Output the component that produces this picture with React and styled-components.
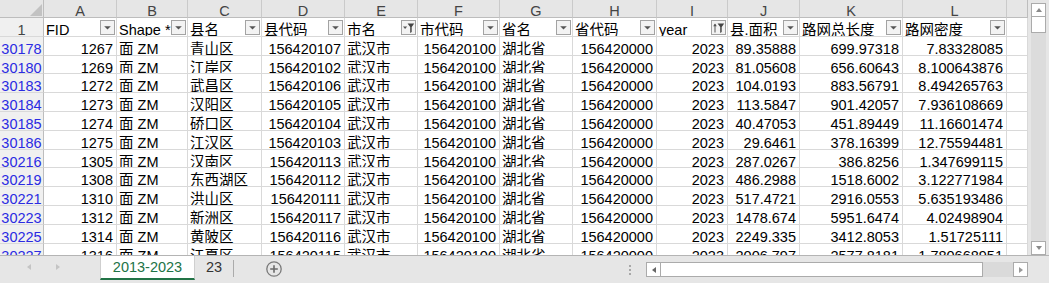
import React from 'react';
import styled, { createGlobalStyle, css } from 'styled-components';

const GlobalStyle = createGlobalStyle`
  html, body { margin: 0; padding: 0; overflow: hidden; background: #e6e6e6; }
  body { font-family: "Liberation Sans", "Noto Sans CJK SC", sans-serif; }
`;

const COL_WIDTHS = [44, 73, 71, 74, 83, 73, 82, 73, 84, 71, 72, 103, 104, 21];

const COLUMNS = [
  { letter: 'A', label: 'FID', num: true },
  { letter: 'B', label: 'Shape *', num: false },
  { letter: 'C', label: '县名', num: false },
  { letter: 'D', label: '县代码', num: true },
  { letter: 'E', label: '市名', num: false, filter: 'filtered' },
  { letter: 'F', label: '市代码', num: true },
  { letter: 'G', label: '省名', num: false },
  { letter: 'H', label: '省代码', num: true },
  { letter: 'I', label: 'year', num: true, filter: 'sorted' },
  { letter: 'J', label: '县.面积', num: true },
  { letter: 'K', label: '路网总长度', num: true },
  { letter: 'L', label: '路网密度', num: true },
];

const ROWS = [
  ['30178', '1267', '面 ZM', '青山区', '156420107', '武汉市', '156420100', '湖北省', '156420000', '2023', '89.35888', '699.97318', '7.83328085'],
  ['30180', '1269', '面 ZM', '江岸区', '156420102', '武汉市', '156420100', '湖北省', '156420000', '2023', '81.05608', '656.60643', '8.100643876'],
  ['30183', '1272', '面 ZM', '武昌区', '156420106', '武汉市', '156420100', '湖北省', '156420000', '2023', '104.0193', '883.56791', '8.494265763'],
  ['30184', '1273', '面 ZM', '汉阳区', '156420105', '武汉市', '156420100', '湖北省', '156420000', '2023', '113.5847', '901.42057', '7.936108669'],
  ['30185', '1274', '面 ZM', '硚口区', '156420104', '武汉市', '156420100', '湖北省', '156420000', '2023', '40.47053', '451.89449', '11.16601474'],
  ['30186', '1275', '面 ZM', '江汉区', '156420103', '武汉市', '156420100', '湖北省', '156420000', '2023', '29.6461', '378.16399', '12.75594481'],
  ['30216', '1305', '面 ZM', '汉南区', '156420113', '武汉市', '156420100', '湖北省', '156420000', '2023', '287.0267', '386.8256', '1.347699115'],
  ['30219', '1308', '面 ZM', '东西湖区', '156420112', '武汉市', '156420100', '湖北省', '156420000', '2023', '486.2988', '1518.6002', '3.122771984'],
  ['30221', '1310', '面 ZM', '洪山区', '156420111', '武汉市', '156420100', '湖北省', '156420000', '2023', '517.4721', '2916.0553', '5.635193486'],
  ['30223', '1312', '面 ZM', '新洲区', '156420117', '武汉市', '156420100', '湖北省', '156420000', '2023', '1478.674', '5951.6474', '4.02498904'],
  ['30225', '1314', '面 ZM', '黄陂区', '156420116', '武汉市', '156420100', '湖北省', '156420000', '2023', '2249.335', '3412.8053', '1.51725111'],
  ['30227', '1316', '面 ZM', '江夏区', '156420115', '武汉市', '156420100', '湖北省', '156420000', '2023', '2006.797', '2577.8181', '1.780668951'],
];

const GRID = '#d9d9d9';
const HEAD_LINE = '#bdbdbd';

const Window = styled.div`
  width: 1049px;
  height: 283px;
  display: flex;
  flex-direction: column;
  background: #e6e6e6;
  overflow: hidden;
  font-family: "Liberation Sans", "Noto Sans CJK SC", sans-serif;
`;

const Main = styled.div`
  display: flex;
  height: 255px;
`;

const Sheet = styled.div`
  width: 1028px;
  height: 255px;
  overflow: hidden;
  display: grid;
  grid-template-columns: ${COL_WIDTHS.map((w) => `${w}px`).join(' ')};
  grid-template-rows: 18px repeat(13, 18.8px);
  align-content: start;
  background: #fff;
`;

const Corner = styled.div`
  box-sizing: border-box;
  background: #e6e6e6;
  border-right: 1px solid ${HEAD_LINE};
  border-bottom: 1px solid ${HEAD_LINE};
  display: flex;
  justify-content: flex-end;
  align-items: flex-end;
  padding: 0 1px 1px 0;
`;

const CornerMark = styled.span`
  width: 0;
  height: 0;
  border-left: 12px solid transparent;
  border-bottom: 12px solid #c2c2c2;
`;

const ColHead = styled.div`
  box-sizing: border-box;
  background: #e6e6e6;
  color: #444;
  font-size: 14.5px;
  line-height: 16px;
  padding-top: 3px;
  text-align: center;
  border-right: 1px solid ${(p) => (p.$last ? HEAD_LINE : '#cacaca')};
  border-bottom: 1px solid ${HEAD_LINE};
  overflow: hidden;
`;

const RowHead = styled.div`
  box-sizing: border-box;
  background: #f0f0f0;
  color: ${(p) => (p.$filtered ? '#2b2be2' : '#444')};
  font-size: 14.5px;
  line-height: 16px;
  padding-top: 4px;
  text-align: center;
  border-right: 1px solid ${HEAD_LINE};
  border-bottom: 1px solid ${GRID};
  white-space: nowrap;
  overflow: hidden;
`;

const Cell = styled.div`
  box-sizing: border-box;
  position: relative;
  background: #fff;
  color: #000;
  font-size: 14.5px;
  line-height: 16px;
  padding: 4px ${(p) => (p.$num ? '3px' : '2px')} 0 2px;
  text-align: ${(p) => (p.$num ? 'right' : 'left')};
  border-right: 1px solid ${GRID};
  border-bottom: 1px solid ${GRID};
  white-space: nowrap;
  overflow: hidden;
`;

const FilterButton = styled.span`
  position: absolute;
  right: 1px;
  bottom: 1px;
  width: 15px;
  height: 15px;
  box-sizing: border-box;
  border: 1px solid #a3a3a3;
  background: #f3f3f3;
  display: flex;
  align-items: center;
  justify-content: center;
`;

function FilterIcon({ kind }) {
  if (kind === 'filtered') {
    return (
      <svg width="13" height="13" viewBox="0 0 13 13">
        <path d="M1 5.5h4.2L3.1 8z" fill="#555" />
        <path d="M5.6 2.6h6.6L9.7 5.9v5.2l-1.5 0.9V5.9z" fill="#444" />
      </svg>
    );
  }
  if (kind === 'sorted') {
    return (
      <svg width="13" height="13" viewBox="0 0 13 13">
        <path d="M3 11.5V3.2" stroke="#555" strokeWidth="1" fill="none" />
        <path d="M1.2 5.2L3 2.6l1.8 2.6z" fill="#555" />
        <path d="M5.6 2.6h6.6L9.7 5.9v5.2l-1.5 0.9V5.9z" fill="#444" />
      </svg>
    );
  }
  return (
    <svg width="13" height="13" viewBox="0 0 13 13">
      <path d="M3.2 5.2h6.6L6.5 8.6z" fill="#555" />
    </svg>
  );
}

const VScroll = styled.div`
  width: 21px;
  box-sizing: border-box;
  padding: 3px 3px 0 3px;
  display: flex;
  flex-direction: column;
  background: #e6e6e6;
`;

const ScrollBtn = styled.div`
  box-sizing: border-box;
  width: 15px;
  height: ${(p) => (p.$tall ? '14px' : '15px')};
  border: 1px solid #ababab;
  background: #fff;
  display: flex;
  align-items: center;
  justify-content: center;
  flex: none;
`;

const VThumb = styled.div`
  box-sizing: border-box;
  height: 16px;
  border: 1px solid #ababab;
  border-top: none;
  background: #fff;
  flex: none;
`;

const VTrack = styled.div`
  flex: 1;
  background: #dcdcdc;
`;

const Tri = styled.span`
  width: 0;
  height: 0;
  border-style: solid;
  border-color: transparent;
  ${(p) =>
    p.$dir === 'up' &&
    css`
      border-width: 0 3.5px 4px 3.5px;
      border-bottom-color: ${p.$color};
    `}
  ${(p) =>
    p.$dir === 'down' &&
    css`
      border-width: 4px 3.5px 0 3.5px;
      border-top-color: ${p.$color};
    `}
  ${(p) =>
    p.$dir === 'left' &&
    css`
      border-width: 3.5px 4px 3.5px 0;
      border-right-color: ${p.$color};
    `}
  ${(p) =>
    p.$dir === 'right' &&
    css`
      border-width: 3.5px 0 3.5px 4px;
      border-left-color: ${p.$color};
    `}
`;

const TabBar = styled.div`
  height: 28px;
  box-sizing: border-box;
  border-top: 1px solid #b4b4b4;
  display: flex;
  align-items: flex-start;
  background: #e6e6e6;
`;

const Nav = styled.div`
  width: 100px;
  box-sizing: border-box;
  padding: 8px 0 0 27px;
  display: flex;
  gap: 25px;
`;

const Tab = styled.div`
  box-sizing: border-box;
  width: ${(p) => p.$w}px;
  height: 24px;
  padding-top: 3px;
  font-size: 14.5px;
  line-height: 16px;
  text-align: center;
  white-space: nowrap;
  ${(p) =>
    p.$active
      ? css`
          background: #fff;
          color: #217346;
          border-left: 1px solid #cfcfcf;
          border-right: 1px solid #cfcfcf;
          border-bottom: 2px solid #217346;
        `
      : css`
          color: #333;
        `}
`;

const Divider = styled.div`
  width: 1px;
  height: 17px;
  margin-top: 4px;
  background: #ababab;
`;

const AddButton = styled.div`
  width: 16px;
  height: 16px;
  margin: 5px 0 0 32px;
  display: flex;
`;

const Spacer = styled.div`
  flex: 1;
`;

const Grip = styled.div`
  width: 2px;
  margin: 9px 15px 0 0;
  display: flex;
  flex-direction: column;
  gap: 2px;
`;

const GripDot = styled.span`
  width: 2px;
  height: 2px;
  background: #a8a8a8;
`;

const HScroll = styled.div`
  width: 382px;
  height: 15px;
  margin: 6px 21px 0 0;
  display: flex;
`;

const HTrack = styled.div`
  flex: 1;
  background: #dadada;
  display: flex;
`;

const HThumb = styled.div`
  box-sizing: border-box;
  width: 322px;
  height: 15px;
  border: 1px solid #ababab;
  border-left: none;
  background: #fff;
`;

export default function App() {
  return (
    <>
      <GlobalStyle />
      <Window>
        <Main>
          <Sheet>
            <Corner>
              <CornerMark />
            </Corner>
            {COLUMNS.map((c) => (
              <ColHead key={c.letter}>{c.letter}</ColHead>
            ))}
            <ColHead $last />

            <RowHead>1</RowHead>
            {COLUMNS.map((c) => (
              <Cell key={c.letter}>
                {c.label}
                <FilterButton>
                  <FilterIcon kind={c.filter} />
                </FilterButton>
              </Cell>
            ))}
            <Cell />

            {ROWS.map((r) => (
              <React.Fragment key={r[0]}>
                <RowHead $filtered>{r[0]}</RowHead>
                {COLUMNS.map((c, i) => (
                  <Cell key={c.letter} $num={c.num}>
                    {r[i + 1]}
                  </Cell>
                ))}
                <Cell />
              </React.Fragment>
            ))}
          </Sheet>
          <VScroll>
            <ScrollBtn $tall>
              <Tri $dir="up" $color="#8a8a8a" />
            </ScrollBtn>
            <VThumb />
            <VTrack />
            <ScrollBtn $tall>
              <Tri $dir="down" $color="#8a8a8a" />
            </ScrollBtn>
          </VScroll>
        </Main>
        <TabBar>
          <Nav>
            <Tri $dir="left" $color="#c4c4c4" />
            <Tri $dir="right" $color="#c4c4c4" />
          </Nav>
          <Tab $active $w={95}>2013-2023</Tab>
          <Tab $w={38}>23</Tab>
          <Divider />
          <AddButton>
            <svg width="16" height="16" viewBox="0 0 16 16">
              <circle cx="8" cy="8" r="7.2" fill="none" stroke="#7a7a7a" strokeWidth="1.3" />
              <path d="M8 4.2v7.6M4.2 8h7.6" stroke="#6a6a6a" strokeWidth="1.6" />
            </svg>
          </AddButton>
          <Spacer />
          <Grip>
            <GripDot />
            <GripDot />
            <GripDot />
          </Grip>
          <HScroll>
            <ScrollBtn>
              <Tri $dir="left" $color="#666" />
            </ScrollBtn>
            <HTrack>
              <HThumb />
            </HTrack>
            <ScrollBtn>
              <Tri $dir="right" $color="#999" />
            </ScrollBtn>
          </HScroll>
        </TabBar>
      </Window>
    </>
  );
}
